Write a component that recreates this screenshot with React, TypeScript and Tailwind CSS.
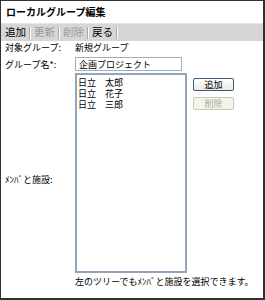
import React from 'react';

const Sep = () => <div className="w-px h-[12px] bg-[#a8a8a8] border-r border-white mx-[3px] box-content" />;

const App = () => {
  const members = ['日立　太郎', '日立　花子', '日立　三郎'];

  return (
    <div className="w-[265px] h-[300px] bg-white border-t border-l border-r-2 border-b-2 border-[#333] font-['Noto_Sans_CJK_JP',sans-serif] text-[9px] leading-none text-black">
      <div className="h-[22px] pl-[5px] flex items-center text-[10px] font-bold">ローカルグループ編集</div>

      <div className="h-[18px] bg-[#d6d6d6] border-t border-[#e6e6e6] flex items-center pl-[4px] text-[10.5px]">
        <span>追加</span>
        <Sep />
        <span className="text-[#9a9a9a]">更新</span>
        <Sep />
        <span className="text-[#9a9a9a]">削除</span>
        <Sep />
        <span>戻る</span>
        <Sep />
      </div>

      <div className="grid grid-cols-[70px_1fr] pl-[4px]">
        <div className="h-[12px] flex items-center">対象グループ:</div>
        <div className="h-[12px] flex items-center">新規グループ</div>

        <div className="mt-[4px] h-[14px] flex items-center">グループ名*:</div>
        <div className="mt-[4px] h-[14px] w-[107px] border border-[#a5acb5] flex items-center pl-[3px]">企画プロジェクト</div>

        <div className="self-center">ﾒﾝﾊﾞと施設:</div>
        <div className="mt-[2px]">
          <div className="flex">
            <div className="w-[112px] h-[200px] border-2 border-[#8fa6bd] pl-[1px] pt-[2px] flex flex-col leading-[11px]">
              {members.map((m) => (
                <div key={m}>{m}</div>
              ))}
            </div>
            <div className="ml-[6px] mt-[5px] flex flex-col gap-[6px]">
              <div className="w-[41px] h-[13px] rounded-[2px] border border-[#3c5a7a] bg-gradient-to-b from-white to-[#ebebe4] flex items-center justify-center">追加</div>
              <div className="w-[41px] h-[13px] rounded-[2px] border border-[#c9c7ba] bg-[#f5f4ea] text-[#a8a8a0] flex items-center justify-center">削除</div>
            </div>
          </div>
          <div className="mt-[2px] h-[12px] flex items-center">左のツリーでもﾒﾝﾊﾞと施設を選択できます。</div>
        </div>
      </div>
    </div>
  );
};

export default App;
